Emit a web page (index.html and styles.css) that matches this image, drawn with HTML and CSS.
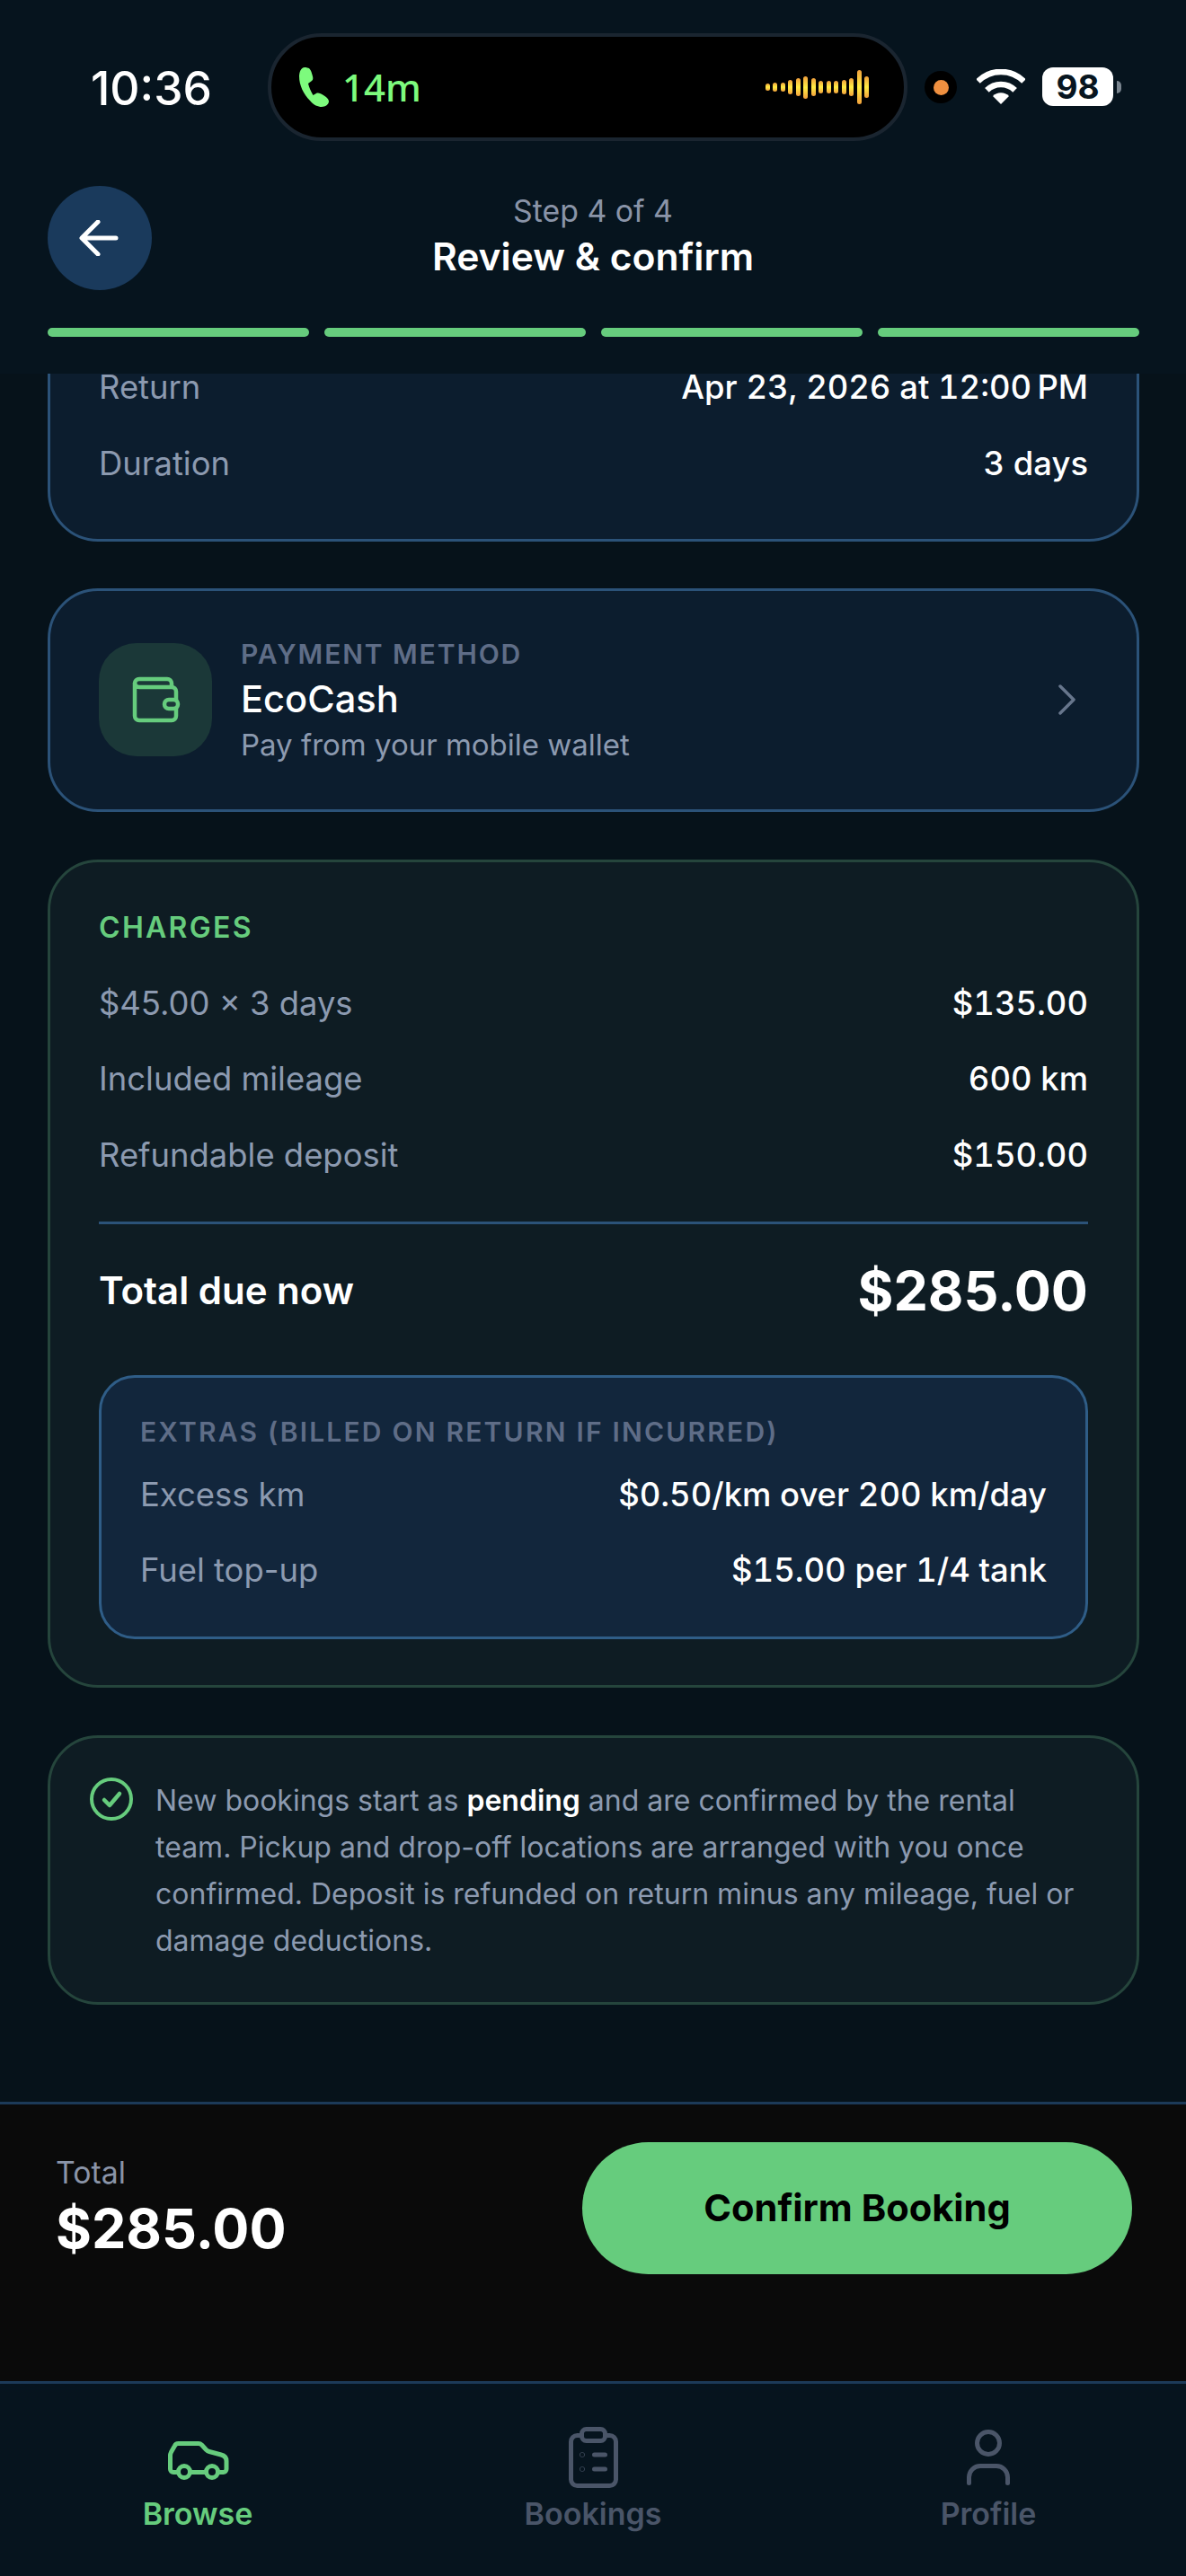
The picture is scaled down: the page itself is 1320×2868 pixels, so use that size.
FILE: index.html
```html
<!doctype html>
<html>
<head>
    <meta charset="utf-8">
    <title>Review &amp; confirm</title>
    <link rel="stylesheet" href="styles.css">
</head>
<body>
<div class="screen">
    <div class="status">
        <span class="clock">10:36</span>
        <div class="island">
            <svg class="phone" width="33" height="44" viewBox="0 0 33 44"><path d="M6 0C2 .5 0 5 0 10c0 10 5 20 12 27 4 5 9 7 13 7s8-3 8-6-3-5-6-7c-3-2-6-3-8-2l-3.500 2C13 27 11 22 10 18l4-3c1.500-1 1.500-3 1-5-1-4-2-7-3.500-8.500C10 .5 8 0 6 0z"/></svg>
            <span class="call-time">14m</span>
            <div class="wave">
                <i style="height:8px"></i><i style="height:10px"></i><i style="height:10px"></i><i style="height:16px"></i><i style="height:20px"></i><i style="height:25px"></i><i style="height:20px"></i><i style="height:14px"></i><i style="height:14px"></i><i style="height:14px"></i><i style="height:16px"></i><i style="height:20px"></i><i style="height:38px"></i><i style="height:24px"></i>
            </div>
        </div>
        <div class="mic-dot"><span></span></div>
        <svg class="wifi" width="54" height="39" viewBox="0 0 54 39"><path d="M1.500 13.500A36 36 0 0 1 52.500 13.500M11.400 23.400A22 22 0 0 1 42.600 23.400" fill="none" stroke="#fff" stroke-width="6.500"/><path d="M27 39L18 30A12.700 12.700 0 0 1 36 30z" fill="#fff"/></svg>
        <div class="battery">98</div>
        <div class="battery-nub"></div>
    </div>

    <div class="head">
        <div class="back">
            <svg width="44" height="40" viewBox="0 0 44 40"><path d="M41 20H4M21 2L3 20l18 18" fill="none" stroke="#fff" stroke-width="5" stroke-linecap="round" stroke-linejoin="round"/></svg>
        </div>
        <div class="head-title">
            <div class="step">Step 4 of 4</div>
            <div class="title">Review &amp; confirm</div>
        </div>
    </div>

    <div class="progress"><span></span><span></span><span></span><span></span></div>

    <div class="scroll">
        <div class="card card-dates">
            <div class="row"><span>Return</span><b>Apr 23, 2026 at 12:00&#8201;PM</b></div>
            <div class="row"><span>Duration</span><b>3 days</b></div>
        </div>

        <div class="card card-pay">
            <div class="pay-icon">
                <svg width="72" height="72" viewBox="0 0 72 72" fill="none" stroke="#66cc7d" stroke-width="4.500"><path d="M13 18a5 5 0 0 1 5-5h31a5 5 0 0 1 5 5v4"/><path d="M13 18v36a5 5 0 0 0 5 5h36a5 5 0 0 0 5-5V27a5 5 0 0 0-5-5H18a5 5 0 0 1-5-5"/><rect x="46" y="36" width="15" height="10" rx="5" fill="#1b3838"/></svg>
            </div>
            <div class="pay-text">
                <div class="pay-label">PAYMENT METHOD</div>
                <div class="pay-name">EcoCash</div>
                <div class="pay-desc">Pay from your mobile wallet</div>
            </div>
            <svg class="chevron" width="24" height="36" viewBox="0 0 24 36"><path d="M4 3l15 15L4 33" fill="none" stroke="#67768c" stroke-width="3.500" stroke-linecap="round" stroke-linejoin="round"/></svg>
        </div>

        <div class="card card-charges">
            <div class="charges-head">CHARGES</div>
            <div class="row"><span>$45.00 × 3 days</span><b>$135.00</b></div>
            <div class="row"><span>Included mileage</span><b>600 km</b></div>
            <div class="row"><span>Refundable deposit</span><b>$150.00</b></div>
            <div class="divider"></div>
            <div class="total-row"><span>Total due now</span><b>$285.00</b></div>
            <div class="extras">
                <div class="extras-head">EXTRAS (BILLED ON RETURN IF INCURRED)</div>
                <div class="row"><span>Excess km</span><b>$0.50/km over 200 km/day</b></div>
                <div class="row"><span>Fuel top-up</span><b>$15.00 per 1/4 tank</b></div>
            </div>
        </div>

        <div class="card card-note">
            <svg class="check" width="48" height="48" viewBox="0 0 48 48" fill="none" stroke="#66cc7d"><circle cx="24" cy="24" r="22" stroke-width="4"/><path d="M16 25l6 6 11-13" stroke-width="4.500" stroke-linecap="round" stroke-linejoin="round"/></svg>
            <p>New bookings start as <b>pending</b> and are confirmed by the rental team. Pickup and drop-off locations are arranged with you once confirmed. Deposit is refunded on return minus any mileage, fuel or damage deductions.</p>
        </div>
    </div>

    <div class="footer">
        <div class="footer-total">
            <div class="footer-label">Total</div>
            <div class="footer-sum">$285.00</div>
        </div>
        <div class="confirm">Confirm Booking</div>
    </div>

    <div class="nav">
        <div class="nav-item active">
            <svg width="72" height="72" viewBox="0 0 72 72" fill="none" stroke="currentColor" stroke-width="5" stroke-linecap="round" stroke-linejoin="round"><path d="M14.500 50.500H9A3.500 3.500 0 0 1 5.500 47V32q0-2 1-4l4-7q1-2.500 4-2.500H37q2 0 3.500 1.500l5 5.500q1.500 1.500 3.500 2l13 3.500q6 1.500 6 7V47a3.500 3.500 0 0 1-3.500 3.500H59M27.500 50.500h18"/><circle cx="21" cy="50" r="6.500"/><circle cx="52" cy="50" r="6.500"/></svg>
            <span>Browse</span>
        </div>
        <div class="nav-item">
            <svg width="72" height="72" viewBox="0 0 72 72" fill="none" stroke="currentColor" stroke-width="5" stroke-linecap="round" stroke-linejoin="round"><rect x="11.500" y="9.500" width="50" height="56" rx="7"/><rect x="23.500" y="2.500" width="26" height="13" rx="5" fill="#06141e"/><path d="M37.500 31h12M37.500 47h12"/><circle cx="24" cy="31" r=".3"/><circle cx="24" cy="47" r=".3"/></svg>
            <span>Bookings</span>
        </div>
        <div class="nav-item">
            <svg width="72" height="72" viewBox="0 0 72 72" fill="none" stroke="currentColor" stroke-width="5" stroke-linecap="round" stroke-linejoin="round"><circle cx="36" cy="18" r="12.500"/><path d="M14.500 62.500V56A12.500 12.500 0 0 1 27 43.500h18A12.500 12.500 0 0 1 57.500 56v6.500"/></svg>
            <span>Profile</span>
        </div>
    </div>
</div>
</body>
</html>
```

FILE: styles.css
```css
*{box-sizing:border-box;}
body{margin:0; padding:0; background:#06141e; font-family:Inter,"Liberation Sans",sans-serif; color:#fff;}
.screen{width:1320px; height:2868px; display:flex; flex-direction:column; overflow:hidden;}

.status{height:194px; padding-top:37px; display:flex; align-items:flex-start; position:relative;}
.clock{width:298px; height:122px; line-height:122px; padding-left:101px; font-size:51.500px; font-weight:500; flex:none;}
.island{width:712px; height:120px; border:4px solid #1a2530; border-radius:60px; background:#000; display:flex; align-items:center; padding-left:31px; flex:none;}
.phone{fill:#7dfb7d; margin-right:15px;}
.call-time{font-family:"Noto Sans",sans-serif; font-size:42px; font-weight:500; color:#7dfb7d; margin-top:-2px;}
.wave{margin-left:auto; margin-right:39px; display:flex; align-items:center; gap:3.500px;}
.wave i{display:block; width:5px; border-radius:3px; background:linear-gradient(#f2a03c,#ffee44 50%,#f2a03c);}
.mic-dot{width:36px; height:36px; border-radius:50%; background:#000; margin:42px 0 0 19px; display:flex; align-items:center; justify-content:center; flex:none;}
.mic-dot span{width:17px; height:17px; border-radius:50%; background:#f09040;}
.wifi{margin:40px 0 0 22px; flex:none;}
.battery{width:79px; height:43px; line-height:43px; margin:38px 0 0 19px; border-radius:12px; background:#fff; color:#071520; font-size:37px; font-weight:700; text-align:center; flex:none;}
.battery-nub{width:5px; height:14px; margin:53px 0 0 4px; background:#7a858f; border-radius:0 7px 7px 0; flex:none;}

.head{height:129px; padding:13px 53px 0; position:relative; display:flex; flex:none;}
.back{width:116px; height:116px; border-radius:50%; background:#1a3a5c; display:flex; align-items:center; justify-content:center;}
.back svg{margin-left:-2px;}
.head-title{position:absolute; left:0; right:0; top:0; text-align:center;}
.step{height:46px; margin-top:18px; line-height:46px; font-size:33.800px; color:#8a94a8;}
.title{height:50px; margin-top:3px; line-height:50px; font-size:42.600px; font-weight:600;}

.progress{margin:42px 52px 0 53px; height:10px; display:flex; gap:16.500px; flex:none;}
.progress span{flex:1; background:#66cc7d; border-radius:5px;}

.scroll{height:1924px; margin-top:41px; padding:0 52px 0 53px; overflow:hidden; flex:none; background:#06121a;}
.card{border:3px solid #2b5278; border-radius:56px; background:#0c1d2e;}
.row{height:52px; line-height:52px; display:flex; justify-content:space-between; font-size:36.400px; color:#8c9ab0; margin-bottom:32.500px;}
.row b{font-weight:500; color:#fff; font-variant-numeric:tabular-nums;}
.row:last-child{margin-bottom:0;}

.card-dates{margin-top:-68px; padding:54px 54px 58px;}

.card-pay{height:249px; margin-top:52px; padding:0 32px 0 54px; display:flex; align-items:center;}
.pay-icon{width:126px; height:126px; border-radius:42px; background:#1b3838; display:flex; align-items:center; justify-content:center; flex:none;}
.pay-text{margin-left:32px; flex:1;}
.pay-label{height:36px; line-height:36px; font-size:30px; font-weight:600; letter-spacing:1.900px; color:#5f6d87;}
.pay-name{height:64px; line-height:64px; font-size:41.600px; font-weight:500;}
.pay-desc{height:38px; line-height:38px; font-size:33px; color:#8c9ab0;}
.chevron{margin-right:33px;}

.card-charges{margin-top:53px; padding:54px 54px 51px; background:#0e1c23; border-color:#25453c;}
.charges-head{height:38px; line-height:38px; margin-bottom:39px; font-size:32px; font-weight:600; letter-spacing:2.300px; color:#66cc7d;}
.divider{height:3px; background:#2b5278; margin-top:48px;}
.total-row{height:76px; line-height:76px; margin-top:36px; display:flex; justify-content:space-between; align-items:center;}
.total-row span{font-size:42px; font-weight:600;}
.total-row b{font-size:61px; font-weight:700;}
.extras{margin-top:56px; padding:41px 43px 48px; border:3px solid #2f5d87; border-radius:40px; background:#12263c;}
.extras-head{height:38px; line-height:38px; margin-bottom:25px; font-size:30px; font-weight:600; letter-spacing:2.200px; color:#5f6d87;}

.card-note{margin-top:53px; padding:44px 44px 42px; display:flex; gap:25px; background:#0e1c23; border-color:#25453c;}
.check{flex:none;}
.card-note p{margin:0; font-size:32px; line-height:52px; color:#8c9ab0;}
.card-note b{font-weight:600; color:#fff;}

.footer{height:311px; border-top:3px solid #1c3a58; background:#0a0a0a; padding:42px 60px 0 62px; display:flex; justify-content:space-between; align-items:flex-start; flex:none;}
.footer-label{margin-top:14px; height:40px; line-height:40px; font-size:33.800px; color:#8a94a8;}
.footer-sum{height:76px; line-height:76px; margin-top:4px; font-size:61px; font-weight:700;}
.confirm{width:612px; height:147px; line-height:147px; border-radius:74px; background:#66cc7d; color:#000; text-align:center; font-size:41.600px; font-weight:700;}

.nav{flex:1; border-top:3px solid #1c3a58; display:flex; padding-top:48px;}
.nav-item{flex:1; display:flex; flex-direction:column; align-items:center; color:#4a5568; font-size:34px; font-weight:600;}
.nav-item span{height:44px; line-height:44px; margin-top:3px;}
.nav-item.active{color:#66cc7d;}
```
